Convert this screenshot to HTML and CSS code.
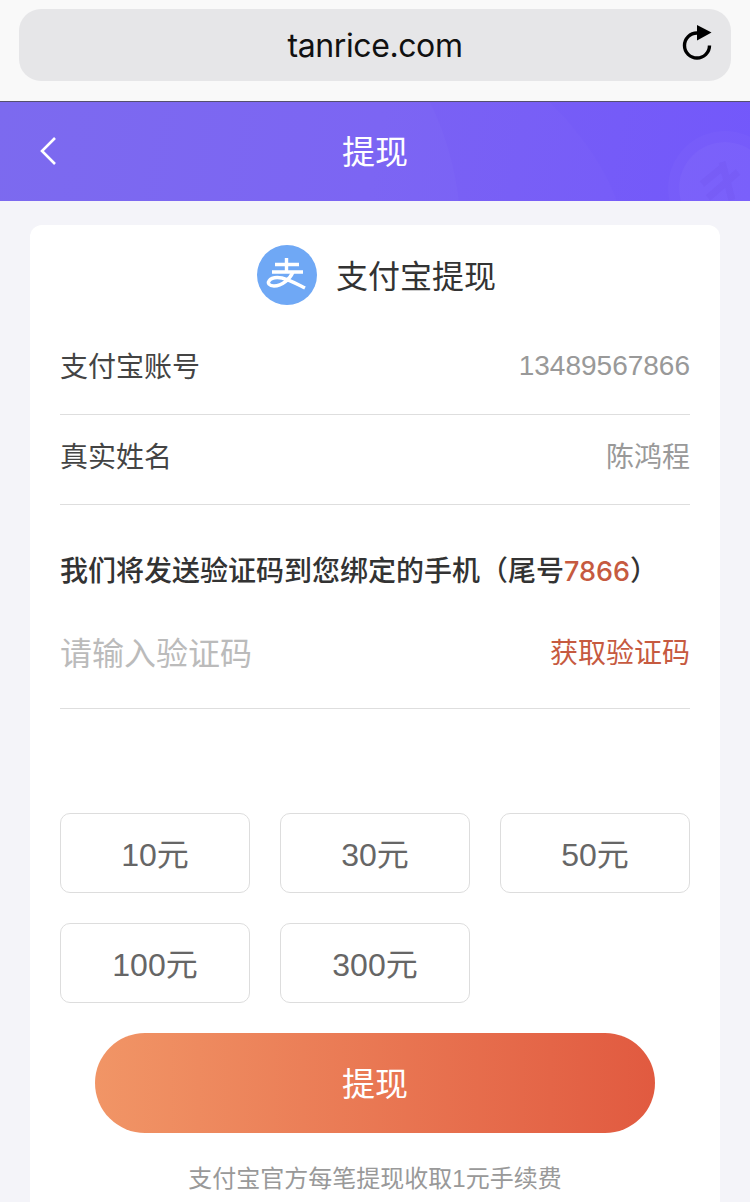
FILE: index.html
```html
<!DOCTYPE html>
<html lang="zh-CN">
<head>
  <meta charset="UTF-8" />
  <meta name="viewport" content="width=device-width, initial-scale=1.0"/>
  <title>提现</title>
  <link rel="stylesheet" href="styles.css">
</head>
<body>
  <div class="browser-bar">
    <div class="url-pill">
      <span class="url-text">tanrice.com</span>
      <svg class="reload" width="32" height="38" viewBox="0 0 32 38">
        <path d="M27.500 21.500a12.500 12.500 0 1 1-12.500-12.500h3" fill="none" stroke="#000" stroke-width="3.400"/>
        <path d="M15 1l14.500 7.500-14.500 8z" fill="#000"/>
      </svg>
    </div>
  </div>

  <header class="top-bar">
    <svg class="bar-art" width="750" height="99" viewBox="0 0 750 99">
      <path d="M0 0H430C445 30 455 65 459 99H0z" fill="#fff" fill-opacity="0.02"/>
      <path d="M0 0H550C580 30 605 65 617 99H0z" fill="#fff" fill-opacity="0.015"/>
      <circle cx="725" cy="86" r="57" fill="#fff" fill-opacity="0.025"/>
      <circle cx="725" cy="86" r="46" fill="#fff" fill-opacity="0.03"/>
      <path d="M702 82l22-18M708 96l30-26M722 60l10 38" stroke="#5f45e0" stroke-opacity="0.12" stroke-width="7" fill="none"/>
    </svg>
    <svg class="back" width="20" height="30" viewBox="0 0 20 30">
      <path d="M16 2L3 15l13 13" fill="none" stroke="#fff" stroke-width="2.600"/>
    </svg>
    <h1 class="top-title">提现</h1>
  </header>

  <main class="card">
    <div class="card-head">
      <svg class="alipay" width="60" height="60" viewBox="0 0 60 60">
        <circle cx="30" cy="30" r="30" fill="#6fa8f5"/>
        <g fill="none" stroke="#fff" stroke-width="3.400">
          <path d="M18 19.500h24M29.500 13v13M15 27h31"/>
          <path d="M36 27C33 34 25 41 17 41 12 41 10.500 38 12 36 14 33 19 32 25 33 33 35 40 39 48 43"/>
        </g>
      </svg>
      <span class="card-title">支付宝提现</span>
    </div>

    <div class="info-row">
      <span class="info-label">支付宝账号</span>
      <span class="info-value info-num">13489567866</span>
    </div>
    <div class="info-row">
      <span class="info-label">真实姓名</span>
      <span class="info-value">陈鸿程</span>
    </div>

    <p class="notice">我们将发送验证码到您绑定的手机（尾号<em class="accent">7866</em>）</p>

    <div class="code-row">
      <span class="code-input">请输入验证码</span>
      <span class="code-btn">获取验证码</span>
    </div>

    <div class="amounts">
      <div class="amount">10元</div>
      <div class="amount">30元</div>
      <div class="amount">50元</div>
      <div class="amount">100元</div>
      <div class="amount">300元</div>
    </div>

    <button class="submit">提现</button>
    <p class="fee">支付宝官方每笔提现收取1元手续费</p>
  </main>
</body>
</html>
```

FILE: styles.css
```css
* {
  box-sizing: border-box;
}

html,
body {
  height: 1202px;
  overflow: hidden;
}

body {
  margin: 0;
  background: #f4f4f9;
  font-family: "Liberation Sans", "Noto Sans CJK SC", sans-serif;
  color: #333;
}

.browser-bar {
  height: 102px;
  padding: 9px 19px 0;
  background: #f9f9f9;
  border-bottom: 1px solid #55506e;
}

.url-pill {
  position: relative;
  display: flex;
  align-items: center;
  justify-content: center;
  height: 72px;
  background: #e6e6e8;
  border-radius: 22px;
}

.url-text {
  font-family: "Inter", "Liberation Sans", sans-serif;
  font-size: 32px;
  letter-spacing: -0.4px;
  color: #111;
}

.reload {
  position: absolute;
  right: 17px;
  top: 15px;
}

.top-bar {
  position: relative;
  display: flex;
  align-items: center;
  justify-content: center;
  height: 99px;
  margin-bottom: 24px;
  background: linear-gradient(100deg, #7865ef 0%, #7860f3 50%, #7358fb 100%);
  overflow: hidden;
}

.bar-art {
  position: absolute;
  left: 0;
  top: 0;
}

.back {
  position: absolute;
  left: 39px;
  top: 34px;
}

.top-title {
  position: relative;
  margin: 0;
  padding-bottom: 3px;
  font-size: 33px;
  font-weight: 400;
  color: #fff;
}

.card {
  height: 990px;
  margin: 0 30px;
  padding: 20px 30px 0;
  background: #fff;
  border-radius: 12px 12px 0 0;
}

.card-head {
  display: flex;
  align-items: center;
  justify-content: center;
  gap: 19px;
  height: 60px;
  margin-bottom: 20px;
  padding-left: 3px;
}

.alipay {
  flex: none;
}

.card-title {
  padding-bottom: 2px;
  font-size: 32px;
  color: #333;
}

.info-row {
  display: flex;
  justify-content: space-between;
  align-items: center;
  height: 90px;
  padding-bottom: 10px;
  border-bottom: 1px solid #dedede;
  font-size: 28px;
}

.info-label {
  color: #444;
}

.info-value {
  color: #999;
}

.info-num {
  padding-top: 3px;
}

.notice {
  margin: 47px 0 0;
  font-size: 28px;
  line-height: 40px;
  font-weight: 500;
  color: #333;
}

.accent {
  font-family: "Inter", "Liberation Sans", sans-serif;
  font-size: 27px;
  font-style: normal;
  color: #c65a40;
}

.code-row {
  display: flex;
  justify-content: space-between;
  align-items: center;
  height: 103px;
  margin-top: 14px;
  padding-bottom: 12px;
  border-bottom: 1px solid #dedede;
}

.code-input {
  font-size: 32px;
  color: #bbb;
}

.code-btn {
  font-size: 28px;
  color: #c65a40;
}

.amounts {
  display: grid;
  grid-template-columns: repeat(3, 190px);
  justify-content: space-between;
  row-gap: 30px;
  margin-top: 104px;
}

.amount {
  display: flex;
  align-items: center;
  justify-content: center;
  height: 80px;
  padding-bottom: 2px;
  border: 1px solid #ddd;
  border-radius: 10px;
  font-size: 32px;
  color: #666;
}

.submit {
  display: block;
  width: 560px;
  height: 100px;
  margin: 30px auto 0;
  padding: 0 0 2px;
  border: none;
  border-radius: 50px;
  background: linear-gradient(90deg, #f19566 0%, #e15a40 100%);
  color: #fff;
  font-family: inherit;
  font-size: 33px;
}

.fee {
  margin: 26px 0 0;
  text-align: center;
  font-size: 24px;
  color: #999;
}
```
